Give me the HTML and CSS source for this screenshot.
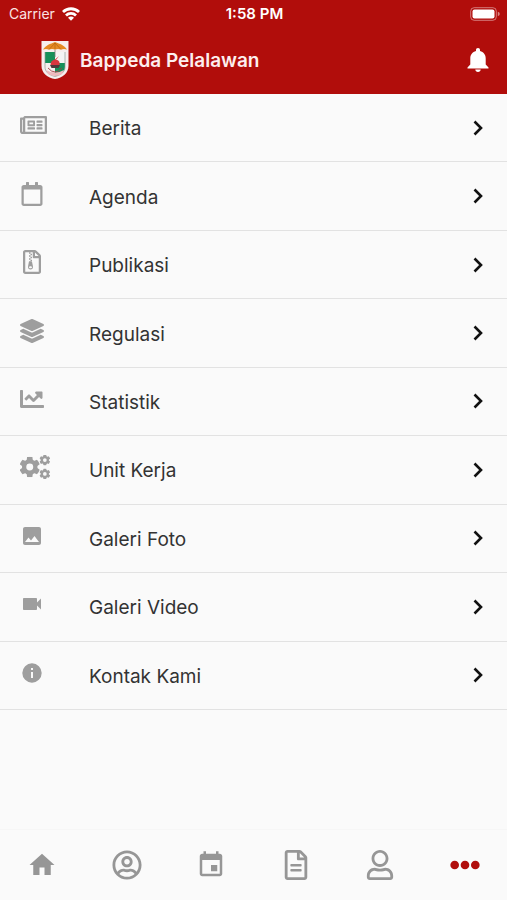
FILE: index.html
```html
<!DOCTYPE html>
<html lang="id">
<head>
  <meta charset="UTF-8">
  <meta name="viewport" content="width=device-width, initial-scale=1.0">
  <title>Bappeda Pelalawan</title>
  <link rel="stylesheet" href="styles.css">
</head>
<body>
  <svg class="symbols" aria-hidden="true">
    <symbol id="chevron" viewBox="0 0 12 18"><path d="M2.500 2.500L9 9l-6.500 6.500" fill="none" stroke="#111" stroke-width="2.600"/></symbol>
    <symbol id="gear" viewBox="-100 -100 200 200">
      <path fill-rule="evenodd" d="M-76 0a76 76 0 1 0 152 0a76 76 0 1 0-152 0zM-34 0a34 34 0 1 0 68 0a34 34 0 1 0-68 0z"/>
      <path id="tooth" d="M-26-97q26-6 52 0l5 40h-62z"/>
      <use href="#tooth" transform="rotate(60)"/>
      <use href="#tooth" transform="rotate(120)"/>
      <use href="#tooth" transform="rotate(180)"/>
      <use href="#tooth" transform="rotate(240)"/>
      <use href="#tooth" transform="rotate(300)"/>
    </symbol>
  </svg>

  <div class="app">
    <header class="header">
      <div class="status">
        <div class="carrier">
          <span>Carrier</span>
          <svg width="18" height="14" viewBox="0 0 18 14" fill="none" stroke="#fff" stroke-width="2.800">
            <path d="M1 5a11.500 11.500 0 0 1 16 0M4 8.400a7.200 7.200 0 0 1 10 0"/>
            <path d="M9 13.800L6 10.800a4.200 4.200 0 0 1 6 0z" fill="#fff" stroke="none"/>
          </svg>
        </div>
        <time class="clock">1:58 PM</time>
        <svg class="battery" width="30" height="14" viewBox="0 0 30 14">
          <rect x=".7" y=".7" width="25.600" height="12.600" rx="3.500" fill="none" stroke="#fff" stroke-opacity=".45"/>
          <rect x="2.500" y="2.500" width="22" height="9" rx="2" fill="#fff"/>
          <path d="M27.800 4.800q2 .6 2 2.200t-2 2.200z" fill="#fff" fill-opacity=".5"/>
        </svg>
      </div>
      <div class="appbar">
        <svg class="logo" width="28" height="40" viewBox="0 0 28 40">
          <path d="M.5 1h27v25c0 7-6 12-13.500 13C6.500 38 .5 33 .5 26z" fill="#f6eeee"/>
          <path d="M4 12h10v11H4z" fill="#16905a"/>
          <path d="M14 23h10v4c0 4-4 8-10 9z" fill="#16905a"/>
          <path d="M14 12h10v11H14z" fill="#f4f4f4"/>
          <path d="M4 12v15c0 5 4 8 10 9.500 6-1.500 10-4.500 10-9.500V12" fill="none" stroke="#8e9a93" stroke-width=".7"/>
          <path d="M2 9.500C5 5 9 4 14 2c5 2 9 3 12 7.500q-3-1-6 0-3-1.200-6 0-3-1.200-6 0-3-1-6 0z" fill="#e58a24"/>
          <path d="M14 3L8 9.500M14 3v6.500M14 3l6 6.500" fill="none" stroke="#b56412" stroke-width=".7"/>
          <path d="M14 10v7" stroke="#777" stroke-width=".8"/>
          <path d="M18 16l-3 4c3 0 4 2 3.500 5h-9c0-3 1.500-5 4.500-5.500z" fill="#d93640"/>
          <path d="M9 25h10l-1.500 3h-7z" fill="#4d3a3d"/>
          <path d="M5 30q9 5 18 0l-2 4q-7 4-14 0z" fill="#efb9bd"/>
          <path d="M7 28q7 8 14 0" fill="none" stroke="#a33c44" stroke-width=".9"/>
        </svg>
        <h1 class="title">Bappeda Pelalawan</h1>
        <button class="bell" type="button" aria-label="Notifikasi">
          <svg width="22" height="26" viewBox="0 0 22 26" fill="#fff">
            <path d="M11 1c1.300 0 2 .9 2 2v.9c3.600.9 5.700 3.700 5.700 7.500v6.200l2.800 3v1H.5v-1l2.800-3v-6.200C3.300 7.600 5.400 4.800 9 3.900V3c0-1.100.7-2 2-2zM8.300 22.600h5.400c0 1.500-1.200 2.500-2.700 2.500s-2.700-1-2.700-2.500z"/>
          </svg>
        </button>
      </div>
    </header>

    <main class="content">
      <ul class="menu">
        <li><a href="#berita">
          <span class="icon"><svg width="27" height="24" viewBox="0 0 576 512"><path d="M552 64H112c-20.858 0-38.643 13.377-45.248 32H24c-13.255 0-24 10.745-24 24v272c0 30.928 25.072 56 56 56h496c13.255 0 24-10.745 24-24V88c0-13.255-10.745-24-24-24zM48 392V144h16v248c0 4.411-3.589 8-8 8s-8-3.589-8-8zm480 8H111.422c.374-2.614.578-5.283.578-8V112h416v288zM172 280h136c6.627 0 12-5.373 12-12v-96c0-6.627-5.373-12-12-12H172c-6.627 0-12 5.373-12 12v96c0 6.627 5.373 12 12 12zm28-80h80v40h-80v-40zm-40 140v-24c0-6.627 5.373-12 12-12h136c6.627 0 12 5.373 12 12v24c0 6.627-5.373 12-12 12H172c-6.627 0-12-5.373-12-12zm192 0v-24c0-6.627 5.373-12 12-12h104c6.627 0 12 5.373 12 12v24c0 6.627-5.373 12-12 12H364c-6.627 0-12-5.373-12-12zm0-144v-24c0-6.627 5.373-12 12-12h104c6.627 0 12 5.373 12 12v24c0 6.627-5.373 12-12 12H364c-6.627 0-12-5.373-12-12zm0 72v-24c0-6.627 5.373-12 12-12h104c6.627 0 12 5.373 12 12v24c0 6.627-5.373 12-12 12H364c-6.627 0-12-5.373-12-12z"/></svg></span>
          <span class="label">Berita</span>
          <svg class="chevron"><use href="#chevron"/></svg>
        </a></li>
        <li><a href="#agenda">
          <span class="icon"><svg width="24" height="24" viewBox="-32 0 512 512"><path d="M400 64h-48V12c0-6.600-5.400-12-12-12h-40c-6.600 0-12 5.400-12 12v52H160V12c0-6.600-5.400-12-12-12h-40c-6.600 0-12 5.400-12 12v52H48C21.500 64 0 85.500 0 112v352c0 26.500 21.500 48 48 48h352c26.500 0 48-21.500 48-48V112c0-26.500-21.500-48-48-48zm-6 400H54c-3.300 0-6-2.700-6-6V160h352v298c0 3.300-2.700 6-6 6z"/></svg></span>
          <span class="label">Agenda</span>
          <svg class="chevron"><use href="#chevron"/></svg>
        </a></li>
        <li><a href="#publikasi">
          <span class="icon"><svg width="24" height="24" viewBox="-64 0 512 512"><path d="M369.900 97.900L286 14C277 5 264.800 0 252.100 0H48C21.500 0 0 21.500 0 48v416c0 26.500 21.500 48 48 48h288c26.500 0 48-21.500 48-48V131.900c0-12.700-5.100-25-14.100-34zM332.100 128H256V51.900l76.100 76.100zM48 464V48h160v104c0 13.300 10.700 24 24 24h104v288H48z"/><path d="M128 48h32v32h-32zM160 80h32v32h-32zM128 112h32v32h-32zM160 144h32v32h-32zM128 176h32v32h-32zM160 208h32v32h-32z"/><path fill-rule="evenodd" d="M128 240h48c8 0 14 5 16 12l20 92c8 42-18 72-52 72s-60-30-52-72zM160 344c-18 0-32 10-32 23s14 23 32 23 32-10 32-23-14-23-32-23z"/></svg></span>
          <span class="label">Publikasi</span>
          <svg class="chevron"><use href="#chevron"/></svg>
        </a></li>
        <li><a href="#regulasi">
          <span class="icon"><svg width="24" height="24" viewBox="0 0 512 512"><path d="M12.410 148.020l232.940 105.670c6.800 3.090 14.490 3.090 21.290 0l232.940-105.670c16.550-7.510 16.550-32.520 0-40.030L266.650 2.310a25.607 25.607 0 0 0-21.290 0L12.410 107.980c-16.550 7.510-16.550 32.530 0 40.040zm487.180 88.280l-58.090-26.330-161.640 73.270c-7.560 3.430-15.590 5.170-23.860 5.170s-16.290-1.740-23.860-5.170L70.510 209.970l-58.100 26.330c-16.550 7.500-16.550 32.500 0 40l232.940 105.590c6.800 3.080 14.490 3.080 21.290 0L499.590 276.300c16.550-7.500 16.550-32.500 0-40zm0 127.800l-57.870-26.230-161.860 73.370c-7.560 3.430-15.590 5.170-23.860 5.170s-16.290-1.740-23.860-5.170L70.290 337.870 12.410 364.100c-16.550 7.500-16.550 32.500 0 40l232.940 105.590c6.800 3.080 14.490 3.080 21.290 0L499.590 404.100c16.550-7.500 16.550-32.500 0-40z"/></svg></span>
          <span class="label">Regulasi</span>
          <svg class="chevron"><use href="#chevron"/></svg>
        </a></li>
        <li><a href="#statistik">
          <span class="icon"><svg width="24" height="24" viewBox="0 0 512 512"><path d="M496 384H64V80c0-8.840-7.160-16-16-16H16C7.160 64 0 71.160 0 80v336c0 17.670 14.330 32 32 32h464c8.840 0 16-7.160 16-16v-32c0-8.840-7.160-16-16-16zM464 96H345.940c-21.380 0-32.090 25.850-16.970 40.970l32.400 32.400L288 242.750l-73.370-73.370c-12.500-12.500-32.760-12.500-45.250 0l-68.690 68.690c-6.250 6.250-6.250 16.380 0 22.630l22.620 22.620c6.250 6.250 16.380 6.250 22.630 0L192 237.250l73.370 73.370c12.500 12.500 32.760 12.500 45.250 0l96-96 32.400 32.400c15.120 15.120 40.970 4.410 40.970-16.970V112c.01-8.840-7.150-16-15.990-16z"/></svg></span>
          <span class="label">Statistik</span>
          <svg class="chevron"><use href="#chevron"/></svg>
        </a></li>
        <li><a href="#unit-kerja">
          <span class="icon"><svg width="30" height="24" viewBox="0 0 640 512">
            <use href="#gear" x="-10" y="38" width="436" height="436"/>
            <use href="#gear" x="414" y="-8" width="232" height="232"/>
            <use href="#gear" x="414" y="288" width="232" height="232"/>
          </svg></span>
          <span class="label">Unit Kerja</span>
          <svg class="chevron"><use href="#chevron"/></svg>
        </a></li>
        <li><a href="#galeri-foto">
          <span class="icon"><svg width="24" height="24" viewBox="0 0 24 24"><path d="M21 19V5c0-1.100-.9-2-2-2H5c-1.100 0-2 .9-2 2v14c0 1.100.9 2 2 2h14c1.100 0 2-.9 2-2zM8.500 13.500l2.500 3.010L14.500 12l4.500 6H5l3.500-4.500z"/></svg></span>
          <span class="label">Galeri Foto</span>
          <svg class="chevron"><use href="#chevron"/></svg>
        </a></li>
        <li><a href="#galeri-video">
          <span class="icon"><svg width="24" height="24" viewBox="0 0 24 24"><path d="M17 10.500V7c0-.55-.45-1-1-1H4c-.55 0-1 .45-1 1v10c0 .55.45 1 1 1h12c.55 0 1-.45 1-1v-3.500l4 4v-11l-4 4z"/></svg></span>
          <span class="label">Galeri Video</span>
          <svg class="chevron"><use href="#chevron"/></svg>
        </a></li>
        <li><a href="#kontak-kami">
          <span class="icon"><svg width="24" height="24" viewBox="0 0 24 24"><path d="M12 2.300a9.700 9.700 0 1 0 0 19.400 9.700 9.700 0 0 0 0-19.400zm1 14.700h-2v-6h2v6zm0-8h-2V7h2v2z"/></svg></span>
          <span class="label">Kontak Kami</span>
          <svg class="chevron"><use href="#chevron"/></svg>
        </a></li>
      </ul>
    </main>

    <nav class="tabs">
      <a href="#home" aria-label="Beranda"><svg viewBox="0 0 24 24"><path d="M10 20v-6h4v6h5v-8h3L12 3 2 12h3v8z"/></svg></a>
      <a href="#profil" aria-label="Profil"><svg viewBox="-8 0 512 512"><path d="M248 104c-53 0-96 43-96 96s43 96 96 96 96-43 96-96-43-96-96-96zm0 144c-26.500 0-48-21.500-48-48s21.500-48 48-48 48 21.500 48 48-21.500 48-48 48zm0-240C111 8 0 119 0 256s111 248 248 248 248-111 248-248S385 8 248 8zm0 448c-49.700 0-95.100-18.300-130.100-48.400 14.900-23 40.400-38.600 69.600-39.500 20.800 6.400 40.600 9.600 60.500 9.600s39.700-3.100 60.500-9.600c29.200 1 54.700 16.500 69.600 39.500-35 30.100-80.400 48.400-130.100 48.400zm162.700-84.100c-24.400-31.400-62.100-51.900-105.100-51.900-10.200 0-26 9.600-57.600 9.600-31.500 0-47.400-9.600-57.600-9.600-42.900 0-80.600 20.500-105.100 51.900C61.900 339.200 48 299.200 48 256c0-110.300 89.700-200 200-200s200 89.700 200 200c0 43.200-13.900 83.200-37.300 115.900z"/></svg></a>
      <a href="#kalender" aria-label="Kalender"><svg viewBox="0 0 24 24"><path d="M17 12h-5v5h5v-5zM16 1v2H8V1H6v2H5c-1.110 0-1.990.9-1.990 2L3 19c0 1.100.89 2 2 2h14c1.100 0 2-.9 2-2V5c0-1.100-.9-2-2-2h-1V1h-2zm3 18H5V8h14v11z"/></svg></a>
      <a href="#dokumen" aria-label="Dokumen"><svg viewBox="-64 0 512 512"><path d="M369.900 97.900L286 14C277 5 264.800 0 252.100 0H48C21.500 0 0 21.500 0 48v416c0 26.500 21.500 48 48 48h288c26.500 0 48-21.500 48-48V131.900c0-12.700-5.100-25-14.100-34zM332.100 128H256V51.900l76.100 76.100zM48 464V48h160v104c0 13.300 10.700 24 24 24h104v288H48z"/><rect x="96" y="240" width="192" height="42" rx="12"/><rect x="96" y="324" width="192" height="42" rx="12"/></svg></a>
      <a href="#akun" aria-label="Akun"><svg viewBox="-32 0 512 512"><path d="M313.600 304c-28.700 0-42.500 16-89.600 16-47.100 0-60.800-16-89.600-16C60.200 304 0 364.200 0 438.400V464c0 26.500 21.500 48 48 48h352c26.500 0 48-21.500 48-48v-25.600c0-74.200-60.200-134.400-134.400-134.400zM400 464H48v-25.600c0-47.600 38.800-86.400 86.400-86.400 14.600 0 38.300 16 89.600 16 51.700 0 74.900-16 89.600-16 47.600 0 86.400 38.800 86.400 86.400V464zM224 288c79.500 0 144-64.500 144-144S303.500 0 224 0 80 64.500 80 144s64.500 144 144 144zm0-240c52.900 0 96 43.100 96 96s-43.100 96-96 96-96-43.100-96-96 43.100-96 96-96z"/></svg></a>
      <a href="#menu" class="active" aria-label="Menu lainnya"><svg viewBox="0 0 512 512"><circle cx="80" cy="256" r="74"/><circle cx="256" cy="256" r="74"/><circle cx="432" cy="256" r="74"/></svg></a>
    </nav>
  </div>
</body>
</html>
```

FILE: styles.css
```css
* {
  box-sizing: border-box;
}
body {
  margin: 0;
  font-family: Inter, "Liberation Sans", sans-serif;
  background-color: #fafafa;
  color: #333;
}
a {
  color: inherit;
  text-decoration: none;
}
svg {
  display: block;
  flex-shrink: 0;
}
.symbols {
  position: absolute;
  width: 0;
  height: 0;
}
.app {
  display: flex;
  flex-direction: column;
  min-height: 100vh;
}

/* header */
.header {
  background-color: #b10d0b;
  color: #fff;
  padding-bottom: 8px;
}
.status {
  display: grid;
  grid-template-columns: 1fr auto 1fr;
  align-items: center;
  height: 27px;
  padding: 0 7px 0 9px;
  font-size: 14px;
}
.carrier {
  display: flex;
  align-items: center;
  gap: 7px;
  color: #fbe3e3;
}
.clock {
  font-size: 15px;
  font-weight: 600;
}
.battery {
  justify-self: end;
}
.appbar {
  display: flex;
  align-items: center;
  height: 59px;
  padding: 6px 18px 0 41px;
}
.title {
  flex: 1;
  margin: 0 0 0 11px;
  padding-top: 1px;
  font-size: 19px;
  font-weight: 600;
  color: #fdeeee;
}
.bell {
  padding: 0;
  border: none;
  background: none;
  cursor: pointer;
}

/* menu */
.content {
  flex: 1;
}
.menu {
  display: grid;
  grid-auto-rows: 1fr;
  min-height: 616px;
  margin: 0;
  padding: 0;
  list-style: none;
}
.menu li {
  border-bottom: 1px solid #e2e2e2;
}
.menu a {
  display: flex;
  align-items: center;
  height: 100%;
  padding: 0 23px 0 20px;
}
.icon {
  width: 69px;
  padding-bottom: 5px;
  fill: #9e9e9e;
}
.label {
  flex: 1;
  padding-top: 2px;
  font-size: 19px;
}
.chevron {
  width: 12px;
  height: 18px;
}

/* bottom tabs */
.tabs {
  display: flex;
  height: 71px;
  border-top: 1px solid #f6f6f6;
  fill: #969696;
}
.tabs a {
  flex: 1;
  display: flex;
  align-items: center;
  justify-content: center;
}
.tabs svg {
  width: 30px;
  height: 30px;
}
.tabs .active {
  fill: #b10d0b;
}
```
